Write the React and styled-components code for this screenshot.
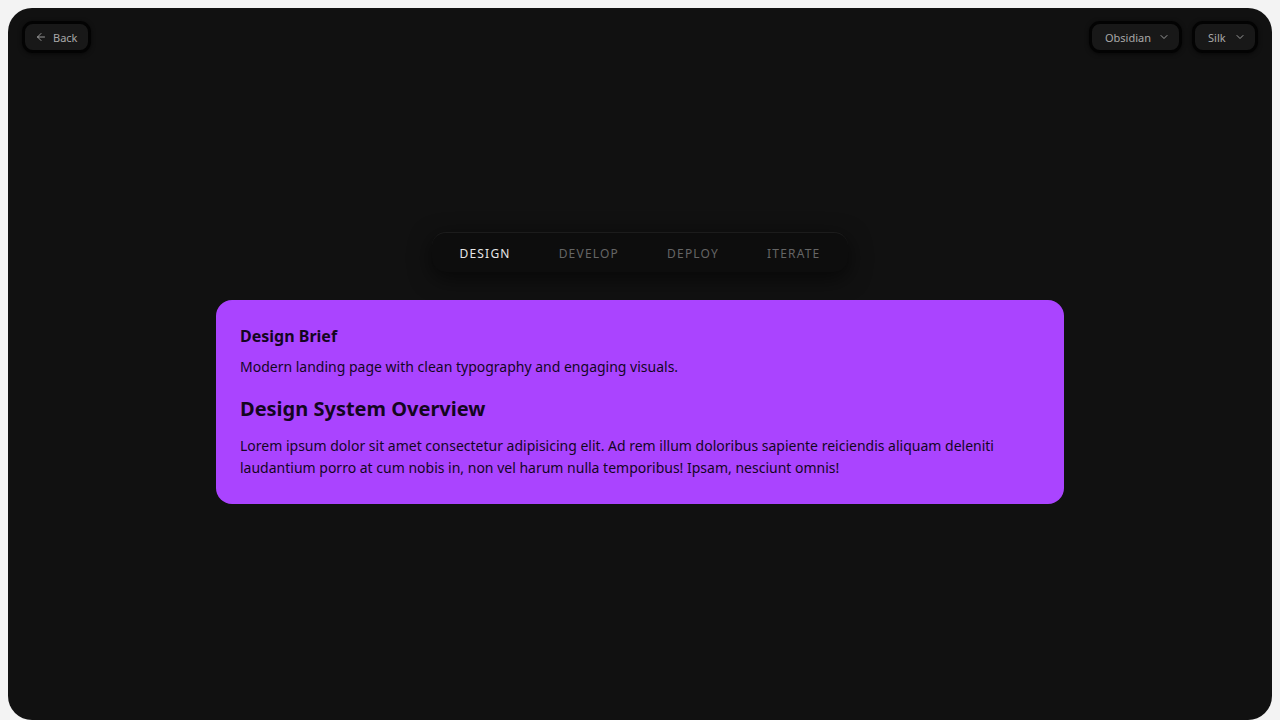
import React, { useState } from "react";
import styled, { createGlobalStyle } from "styled-components";
import { ArrowLeft, ChevronDown } from "lucide-react";

const GlobalStyle = createGlobalStyle`
  html, body {
    margin: 0;
    padding: 0;
    background: #f3f3f3;
    font-family: "Noto Sans", "Open Sans", sans-serif;
    overflow: hidden;
  }
`;

const Frame = styled.div`
  margin: 8px 8px 0;
  height: calc(100vh - 8px);
  background: #111111;
  border-radius: 24px;
  display: flex;
  flex-direction: column;
  box-sizing: border-box;
  padding: 13px 14px;
`;

const TopBar = styled.div`
  display: flex;
  justify-content: space-between;
  align-items: center;
`;

const Group = styled.div`
  display: flex;
  gap: 10px;
`;

const Pill = styled.button`
  height: 32px;
  box-sizing: border-box;
  display: flex;
  align-items: center;
  gap: ${(p) => (p.$icon === "left" ? "6px" : "0")};
  justify-content: space-between;
  min-width: ${(p) => p.$w || "auto"};
  padding: 0 ${(p) => (p.$icon === "left" ? "11px" : "9px")} 0 ${(p) => (p.$icon === "left" ? "10px" : "13px")};
  background: #181818;
  border: 3px solid #030303;
  border-radius: 11px;
  color: #a8a8a8;
  font-family: "Noto Sans", sans-serif;
  font-size: 11px;
  cursor: pointer;
  box-shadow: 0 1px 4px rgba(0, 0, 0, 0.6);
`;

const Main = styled.main`
  margin-top: 179px;
  display: flex;
  flex-direction: column;
  align-items: center;
`;

const Tabs = styled.div`
  display: flex;
  padding: 4px;
  background: #0d0d0d;
  border-radius: 14px;
  border-top: 1px solid #1c1c1c;
  box-shadow: 0 6px 22px rgba(0, 0, 0, 0.6);
`;

const Tab = styled.button`
  background: none;
  border: none;
  padding: 8px 24px;
  height: 31px;
  font-family: "Noto Sans", sans-serif;
  font-size: 12px;
  letter-spacing: 1.2px;
  text-transform: uppercase;
  color: ${(p) => (p.$active ? "#e6e6e6" : "#656565")};
  cursor: pointer;
`;

const Card = styled.section`
  margin-top: 28px;
  width: 848px;
  box-sizing: border-box;
  padding: 24px 24px 25px;
  background: #aa44ff;
  border-radius: 16px;
  color: #14061f;
`;

const Brief = styled.h3`
  margin: 0;
  font-size: 16px;
  line-height: 24px;
  font-weight: 700;
`;

const Lead = styled.p`
  margin: 9px 0 0;
  font-size: 14px;
  line-height: 20px;
`;

const Heading = styled.h2`
  margin: 18px 0 0;
  font-size: 20px;
  line-height: 28px;
  font-weight: 700;
`;

const Body = styled.p`
  margin: 12px 0 0;
  font-size: 14px;
  line-height: 22px;
`;

const tabs = ["Design", "Develop", "Deploy", "Iterate"];

export default function App() {
  const [active, setActive] = useState("Design");

  return (
    <>
      <GlobalStyle />
      <Frame>
        <TopBar>
          <Pill $icon="left">
            <ArrowLeft size={12} strokeWidth={1.8} />
            Back
          </Pill>
          <Group>
            <Pill $w="93px">
              Obsidian
              <ChevronDown size={12} strokeWidth={1.8} />
            </Pill>
            <Pill $w="66px">
              Silk
              <ChevronDown size={12} strokeWidth={1.8} />
            </Pill>
          </Group>
        </TopBar>
        <Main>
          <Tabs>
            {tabs.map((t) => (
              <Tab key={t} $active={t === active} onClick={() => setActive(t)}>
                {t}
              </Tab>
            ))}
          </Tabs>
          <Card>
            <Brief>Design Brief</Brief>
            <Lead>Modern landing page with clean typography and engaging visuals.</Lead>
            <Heading>Design System Overview</Heading>
            <Body>
              Lorem ipsum dolor sit amet consectetur adipisicing elit. Ad rem illum doloribus
              sapiente reiciendis aliquam deleniti laudantium porro at cum nobis in, non vel
              harum nulla temporibus! Ipsam, nesciunt omnis!
            </Body>
          </Card>
        </Main>
      </Frame>
    </>
  );
}
